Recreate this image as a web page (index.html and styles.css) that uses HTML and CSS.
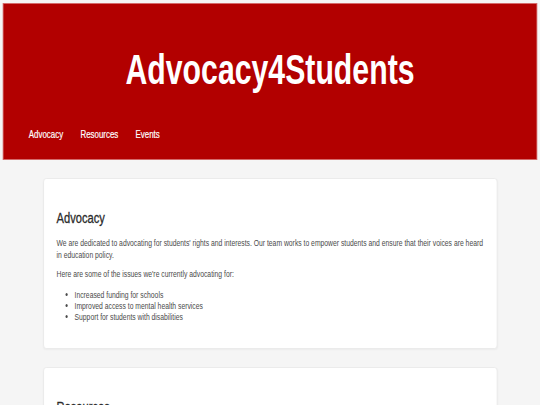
FILE: index.html
```html
<!DOCTYPE html>
<html lang="en">
<head>
<meta charset="utf-8">
<title>Advocacy4Students</title>
<link rel="stylesheet" href="styles.css">
</head>
<body>
<div class="page">
  <header class="site-header">
    <h1 class="site-title">Advocacy4Students</h1>
    <nav class="site-nav">
      <a href="#advocacy">Advocacy</a>
      <a href="#resources">Resources</a>
      <a href="#events">Events</a>
    </nav>
  </header>
  <main class="content">
    <section class="card" id="advocacy">
      <h2 class="card-title">Advocacy</h2>
      <p>We are dedicated to advocating for students' rights and interests. Our team works to empower students and ensure that their voices are heard in education policy.</p>
      <p>Here are some of the issues we're currently advocating for:</p>
      <ul class="issues">
        <li>Increased funding for schools</li>
        <li>Improved access to mental health services</li>
        <li>Support for students with disabilities</li>
      </ul>
    </section>
    <section class="card" id="resources">
      <h2 class="card-title">Resources</h2>
      <p>Find guides, contacts and tools to help students make their voices heard.</p>
    </section>
  </main>
</div>
</body>
</html>
```
FILE: styles.css
```css
html, body {
  margin: 0;
  padding: 0;
  overflow: hidden;
}
body {
  background: #f5f5f5;
  font-family: "Liberation Sans", Arial, sans-serif;
  color: #4a4a4a;
}
.page {
  width: 750px;
  transform: scaleX(0.72);
  transform-origin: 0 0;
}
.site-header {
  margin: 3px 4px 0;
  background: #b20000;
  border: 1px solid #d46a6a;
  padding: 42px 35px 18px;
}
.site-title {
  margin: 0;
  text-align: center;
  color: #fff;
  font-size: 42px;
  line-height: 48px;
  font-weight: bold;
}
.site-nav {
  margin-top: 34px;
  display: flex;
  gap: 24px;
  font-size: 11px;
  line-height: 13px;
}
.site-nav a {
  color: #fff;
  text-decoration: none;
  -webkit-text-stroke: 0.2px #fff;
}
.content {
  padding: 18px 0 0;
  display: flex;
  flex-direction: column;
  align-items: center;
  gap: 18px;
}
.card {
  width: 597px;
  background: #fff;
  border: 1px solid #e9e9e9;
  border-radius: 4px;
  box-shadow: 0 1px 2px rgba(0,0,0,0.04);
  padding: 16px 14px 16px 18px;
}
.card-title {
  margin: 14px 0 10px;
  font-size: 15.5px;
  line-height: 18px;
  font-weight: normal;
  color: #2a2a2a;
  -webkit-text-stroke: 0.3px #2a2a2a;
}
.card p {
  margin: 0 0 8px;
  font-size: 9.45px;
  line-height: 11.5px;
}
.issues {
  margin: 9px 0 10px;
  padding-left: 25px;
  font-size: 9.45px;
  line-height: 11px;
}
```
